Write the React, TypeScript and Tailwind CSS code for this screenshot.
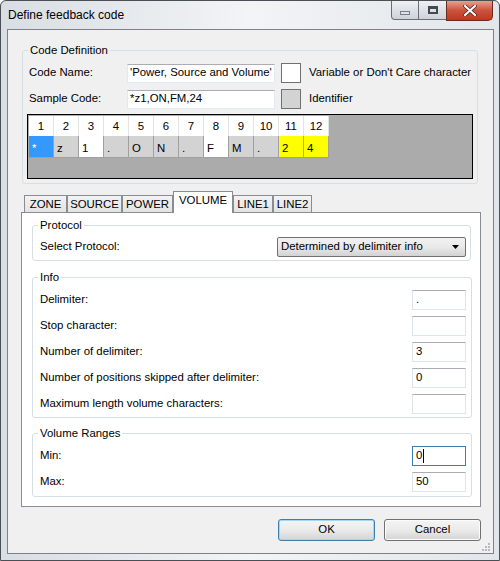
import React from "react";

const cells = [
  { ch: "*", bg: "bg-[#3399ff] text-white" },
  { ch: "z", bg: "bg-[#d3d3d3]" },
  { ch: "1", bg: "bg-white" },
  { ch: ".", bg: "bg-[#d3d3d3]" },
  { ch: "O", bg: "bg-[#d3d3d3]" },
  { ch: "N", bg: "bg-[#d3d3d3]" },
  { ch: ".", bg: "bg-[#d3d3d3]" },
  { ch: "F", bg: "bg-white" },
  { ch: "M", bg: "bg-[#d3d3d3]" },
  { ch: ".", bg: "bg-[#d3d3d3]" },
  { ch: "2", bg: "bg-[#ffff00]" },
  { ch: "4", bg: "bg-[#ffff00]" },
];

const tabs = [
  { name: "ZONE", w: "w-[43px]" },
  { name: "SOURCE", w: "w-[55px]" },
  { name: "POWER", w: "w-[51px]" },
  { name: "VOLUME", w: "w-[60px]" },
  { name: "LINE1", w: "w-[40px]" },
  { name: "LINE2", w: "w-[39px]" },
];

const infoRows = [
  { label: "Delimiter:", value: "." },
  { label: "Stop character:", value: "" },
  { label: "Number of delimiter:", value: "3" },
  { label: "Number of positions skipped after delimiter:", value: "0" },
  { label: "Maximum length volume characters:", value: "" },
];

function TextBox({ value, focused }: { value: string; focused?: boolean }) {
  return (
    <div
      className={
        "flex h-[20px] w-[54px] shrink-0 items-center bg-white pl-[3px] " +
        (focused
          ? "border border-[#3d7bad]"
          : "border border-[#dfe3ea] border-t-[#abadb3]")
      }
    >
      <span>{value}</span>
      {focused && <span className="ml-px h-[14px] w-px bg-black" />}
    </div>
  );
}

function Group({ title, className, children }: { title: string; className: string; children: React.ReactNode }) {
  return (
    <fieldset className={"shrink-0 rounded-[3px] border border-[#d5dfe5] " + className}>
      <legend className="ml-[5px] px-[2px] leading-[15px]">{title}</legend>
      {children}
    </fieldset>
  );
}

function Button({ label, primary }: { label: string; primary?: boolean }) {
  return (
    <button
      className={
        "h-[22px] w-[97px] rounded-[3px] border bg-gradient-to-b from-[#f4f4f4] via-[#ebebeb] to-[#d4d4d4] text-black " +
        (primary ? "border-[#3c7fb1] shadow-[inset_0_0_0_1px_#9fd8f5]" : "border-[#707070] shadow-[inset_0_0_0_1px_#fcfcfc]")
      }
    >
      {label}
    </button>
  );
}

export default function App() {
  return (
    <div className="h-[561px] w-[500px] overflow-hidden bg-white font-['Liberation_Sans',Arial,sans-serif] text-[11.4px] text-black">
      <div className="flex h-[561px] w-[500px] flex-col rounded-t-[6px] border border-[#4a4f55] bg-gradient-to-r from-[#d9dee4] via-[#f2f4f6] to-[#e2e6ea]">
        {/* title bar */}
        <div className="flex h-[28px] shrink-0 items-start justify-between">
          <span className="pl-[7px] pt-[7px] text-[12px] leading-[15px]">Define feedback code</span>
          <div className="mr-[6px] flex h-[19px]">
            <div className="flex h-[19px] w-[28px] items-center justify-center rounded-bl-[4px] border border-t-0 border-[#6b6f75] bg-gradient-to-b from-[#eef1f4] to-[#cdd3da]">
              <div className="mt-[5px] h-[4px] w-[10px] border border-[#7a7f86] bg-[#dfe3e7]" />
            </div>
            <div className="flex h-[19px] w-[27px] items-center justify-center border-b border-[#6b6f75] bg-gradient-to-b from-[#eef1f4] to-[#cdd3da]">
              <div className="h-[8px] w-[10px] border-[2px] border-t-[3px] border-[#45494f]" />
            </div>
            <div className="flex h-[20px] w-[47px] items-center justify-center rounded-br-[5px] border border-t-0 border-[#6b2a1e] bg-gradient-to-b from-[#e6a08f] via-[#c9533c] to-[#c2351f]">
              <svg width="14" height="11" viewBox="0 0 14 11">
                <path d="M2 1 L12 10 M12 1 L2 10" stroke="#4a2018" strokeWidth="3.6" strokeLinecap="round" />
                <path d="M2 1 L12 10 M12 1 L2 10" stroke="#ffffff" strokeWidth="2.2" strokeLinecap="round" />
              </svg>
            </div>
          </div>
        </div>

        {/* client area */}
        <div className="ml-[6px] flex h-[525px] w-[487px] flex-col border border-[#7d8288] bg-[#f0f0f0]">
          <Group title="Code Definition" className="ml-[14px] mt-[13px] w-[456px] pb-[4px]">
            <div className="mt-[5px] flex h-[20px] items-center whitespace-nowrap">
              <span className="w-[104px] shrink-0 pl-[6px]">Code Name:</span>
              <div className="flex h-[19px] w-[148px] shrink-0 items-center overflow-hidden border border-[#e3e9ef] border-t-[#abadb3] bg-white pl-[2px]">
                'Power, Source and Volume'
              </div>
              <div className="ml-[6px] h-[20px] w-[20px] shrink-0 border border-[#707070] bg-white" />
              <span className="ml-[8px]">Variable or Don't Care character</span>
            </div>
            <div className="mt-[6px] flex h-[20px] items-center whitespace-nowrap">
              <span className="w-[104px] shrink-0 pl-[6px]">Sample Code:</span>
              <div className="flex h-[19px] w-[148px] shrink-0 items-center border border-[#e3e9ef] border-t-[#abadb3] bg-white pl-[2px]">
                *z1,ON,FM,24
              </div>
              <div className="ml-[6px] h-[20px] w-[20px] shrink-0 border border-[#707070] bg-[#d3d3d3]" />
              <span className="ml-[8px]">Identifier</span>
            </div>
            <div className="ml-[4px] mt-[5px] h-[65px] w-[446px] border border-black bg-[#ababab] p-px">
              <div className="flex h-[20px] w-[300px] bg-white">
                {cells.map((_, i) => (
                  <div key={i} className="h-[20px] w-[25px] border-r border-[#e3e3e3] text-center leading-[21px]">
                    {i + 1}
                  </div>
                ))}
              </div>
              <div className="flex">
                {cells.map((c, i) => (
                  <div
                    key={i}
                    className={"h-[22px] w-[25px] border-b border-r border-[#a0a0a0] pl-[3px] leading-[24px] " + c.bg}
                  >
                    {c.ch}
                  </div>
                ))}
              </div>
            </div>
          </Group>

          {/* tab strip */}
          <div className="ml-[16px] mt-[8px] flex h-[21px] shrink-0 items-end">
            {tabs.map((t) => {
              const sel = t.name === "VOLUME";
              return (
                <div
                  key={t.name}
                  className={
                    "flex shrink-0 items-center justify-center border border-b-0 border-[#898c95] leading-[15px] " +
                    t.w +
                    " " +
                    (sel ? "relative z-10 h-[22px] bg-white pb-[4px]" : "h-[18px] bg-gradient-to-b from-[#f3f3f3] to-[#e2e2e2]")
                  }
                >
                  {t.name}
                </div>
              );
            })}
          </div>

          {/* tab page */}
          <div className="-mt-px ml-[13px] flex h-[295px] w-[460px] shrink-0 flex-col border border-[#898c95] bg-white">
            <Group title="Protocol" className="ml-[10px] mt-[5px] w-[439px] pb-[3px]">
              <div className="mt-[4px] flex h-[20px] items-center whitespace-nowrap">
                <span className="w-[244px] shrink-0 pl-[7px]">Select Protocol:</span>
                <div className="flex h-[20px] w-[189px] shrink-0 items-center justify-between rounded-[2px] border border-[#707070] bg-gradient-to-b from-[#f2f2f2] via-[#e9e9e9] to-[#d3d3d3] pl-[3px] pr-[6px]">
                  <span>Determined by delimiter info</span>
                  <svg width="7" height="4" viewBox="0 0 7 4">
                    <path d="M0 0 H7 L3.5 4 Z" fill="#000" />
                  </svg>
                </div>
              </div>
            </Group>

            <Group title="Info" className="ml-[10px] mt-[9px] w-[440px] pb-[3px]">
              <div className="mt-[5px] flex flex-col gap-[6px]">
                {infoRows.map((r) => (
                  <div key={r.label} className="flex h-[20px] items-center whitespace-nowrap">
                    <span className="w-[379px] shrink-0 pl-[7px]">{r.label}</span>
                    <TextBox value={r.value} />
                  </div>
                ))}
              </div>
            </Group>

            <Group title="Volume Ranges" className="ml-[10px] mt-[8px] w-[440px] pb-[4px]">
              <div className="mt-[5px] flex flex-col gap-[6px]">
                <div className="flex h-[20px] items-center">
                  <span className="w-[379px] shrink-0 pl-[7px]">Min:</span>
                  <TextBox value="0" focused />
                </div>
                <div className="flex h-[20px] items-center">
                  <span className="w-[379px] shrink-0 pl-[7px]">Max:</span>
                  <TextBox value="50" />
                </div>
              </div>
            </Group>
          </div>

          {/* buttons */}
          <div className="mt-[12px] flex justify-end gap-[9px] pr-[12px]">
            <Button label="OK" primary />
            <Button label="Cancel" />
          </div>
          <div className="mb-[2px] mr-[3px] mt-auto self-end">
            <svg width="9" height="9" viewBox="0 0 9 9">
              <rect x="7" y="1" width="2" height="2" fill="#b9b9b9" />
              <rect x="4" y="4" width="2" height="2" fill="#b9b9b9" />
              <rect x="7" y="4" width="2" height="2" fill="#b9b9b9" />
              <rect x="1" y="7" width="2" height="2" fill="#b9b9b9" />
              <rect x="4" y="7" width="2" height="2" fill="#b9b9b9" />
              <rect x="7" y="7" width="2" height="2" fill="#b9b9b9" />
            </svg>
          </div>
        </div>
      </div>
    </div>
  );
}
